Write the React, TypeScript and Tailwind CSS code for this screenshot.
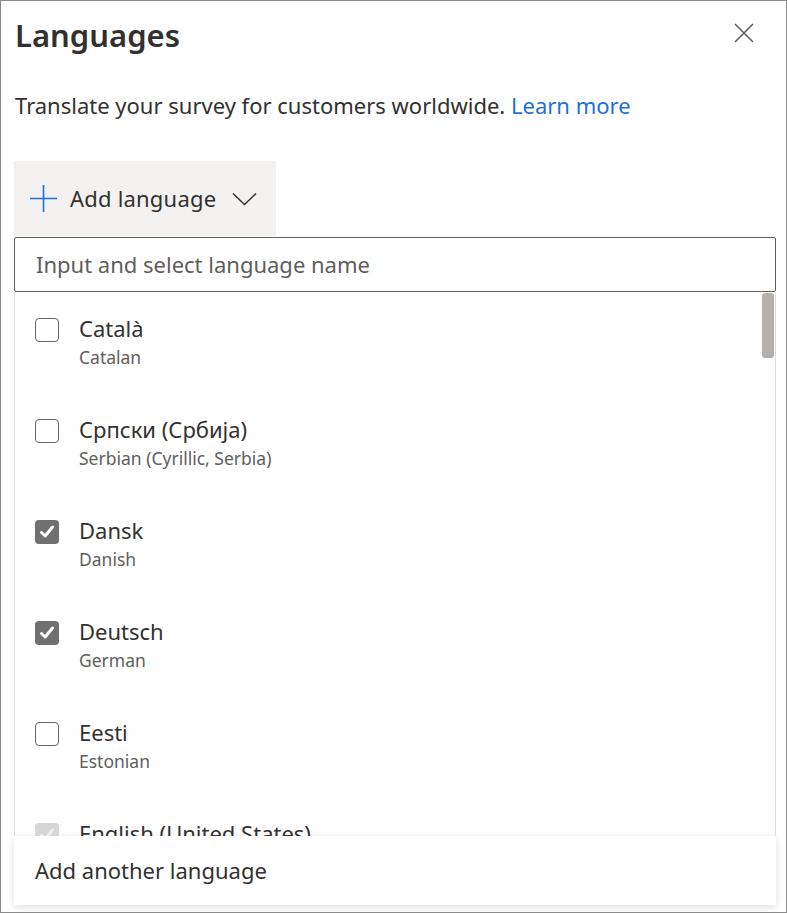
import React from 'react';

const font = { fontFamily: '"Segoe UI", "Noto Sans", "Open Sans", sans-serif' };

type Lang = { name: string; sub: string; checked?: boolean; disabled?: boolean };

const languages: Lang[] = [
  { name: 'Català', sub: 'Catalan' },
  { name: 'Српски (Србија)', sub: 'Serbian (Cyrillic, Serbia)' },
  { name: 'Dansk', sub: 'Danish', checked: true },
  { name: 'Deutsch', sub: 'German', checked: true },
  { name: 'Eesti', sub: 'Estonian' },
  { name: 'English (United States)', sub: 'English', checked: true, disabled: true },
];

function Checkbox({ checked, disabled }: { checked?: boolean; disabled?: boolean }) {
  if (checked) {
    return (
      <div
        className={`mt-[4px] flex h-[24px] w-[24px] shrink-0 items-center justify-center rounded-[4px] ${
          disabled ? 'bg-[#d6d6d6]' : 'bg-[#707070]'
        }`}
      >
        <svg width="18" height="18" viewBox="0 0 18 18" fill="none">
          <path
            d="M3.5 9.5 L7.2 13 L14.5 4"
            stroke={disabled ? '#ededed' : '#ffffff'}
            strokeWidth="3"
            strokeLinecap="round"
            strokeLinejoin="round"
          />
        </svg>
      </div>
    );
  }
  return <div className="mt-[4px] h-[24px] w-[24px] shrink-0 rounded-[4px] border-[1.5px] border-[#666666]" />;
}

export default function App() {
  return (
    <div className="h-[913px] w-[787px] overflow-hidden border border-[#8a8a8a] bg-white text-[#323130]" style={font}>
      <div className="flex items-start justify-between pl-[14px] pr-[28px] pt-[14px]">
        <h1 className="text-[31px] font-semibold leading-[40px]">Languages</h1>
        <button className="mt-[4px] flex h-[28px] w-[28px] items-center justify-center">
          <svg width="20" height="20" viewBox="0 0 20 20" fill="none">
            <path d="M1 1 L19 19 M19 1 L1 19" stroke="#605e5c" strokeWidth="1.6" />
          </svg>
        </button>
      </div>

      <p className="mt-[36px] pl-[14px] text-[22px] leading-[28px]">
        Translate your survey for customers worldwide. <a className="text-[#1f6fd9]">Learn more</a>
      </p>

      <div className="mt-[42px] pl-[13px]">
        <button className="flex h-[75px] w-[262px] items-center bg-[#f3f2f1] pl-[16px] text-[22px]">
          <svg width="27" height="27" viewBox="0 0 27 27" fill="none">
            <path d="M13.5 0 V27 M0 13.5 H27" stroke="#1f6fd9" strokeWidth="1.6" />
          </svg>
          <span className="ml-[13px] tracking-[0.2px]">Add language</span>
          <svg className="ml-[16px]" width="25" height="14" viewBox="0 0 25 14" fill="none">
            <path d="M1 1.5 L12.5 12.5 L24 1.5" stroke="#323130" strokeWidth="1.5" />
          </svg>
        </button>
      </div>

      <div className="ml-[13px] mt-[1px] w-[762px]">
        <div className="flex h-[55px] items-center rounded-[2px] border border-[#605e5c] px-[21px] text-[22px] text-[#605e5c]">
          Input and select language name
        </div>
        <div className="relative h-[544px] overflow-hidden border-x border-[#e1dfdd]">
          <div className="absolute right-[1px] top-[1px] h-[65px] w-[12px] rounded-[3px] bg-[#b3b0ad]" />
          {languages.map((l) => (
            <div key={l.name} className="flex h-[101px] gap-[20px] pl-[20px] pt-[22px]">
              <Checkbox checked={l.checked} disabled={l.disabled} />
              <div>
                <div className="text-[22px] leading-[28px]">{l.name}</div>
                <div className="mt-[4px] text-[17.5px] leading-[22px] text-[#605e5c]">{l.sub}</div>
              </div>
            </div>
          ))}
        </div>
        <div className="flex h-[69px] items-center bg-white pl-[21px] text-[22px] shadow-[0_2px_8px_rgba(0,0,0,0.14)]">
          Add another language
        </div>
      </div>
    </div>
  );
}
